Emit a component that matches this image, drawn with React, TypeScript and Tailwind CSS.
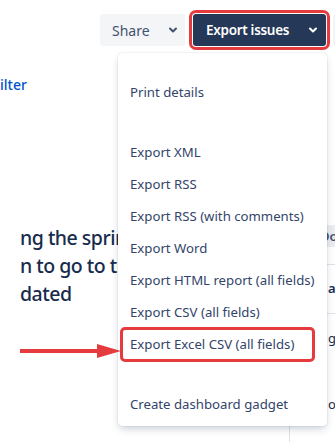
import React from "react";

const Chevron = ({ color }: { color: string }) => (
  <svg width="10" height="10" viewBox="0 0 10 10" fill="none">
    <path d="M2 3.5 L5 6.5 L8 3.5" stroke={color} strokeWidth="2" strokeLinecap="round" strokeLinejoin="round" />
  </svg>
);

const Item = ({ children }: { children: React.ReactNode }) => (
  <div className="h-[32px] flex items-center px-[12px] text-[13.2px] text-[#33446a] whitespace-nowrap">{children}</div>
);

export default function App() {
  return (
    <div className="relative w-[335px] h-[442px] overflow-hidden bg-white font-['Noto_Sans','Open_Sans',sans-serif]">
      {/* top bar */}
      <div className="flex items-start gap-[8px] pl-[100px] pt-[14px] h-[60px]">
        <div className="shrink-0 w-[85px] h-[32px] rounded-[3px] bg-[#f4f5f7] flex items-center justify-between pl-[12px] pr-[7px] text-[14px] text-[#42526e]">
          <span>Share</span>
          <Chevron color="#42526e" />
        </div>
        <div className="shrink-0 w-[133px] h-[32px] rounded-[3px] bg-[#253858] flex items-center justify-between pl-[13px] pr-[8px] text-[13.5px] tracking-[-0.3px] font-semibold text-white outline-[3px] outline-solid outline-[#e53a3e] outline-offset-[1px]">
          <span>Export issues</span>
          <Chevron color="#ffffff" />
        </div>
        <div className="shrink-0 ml-[-1px] w-[20px] h-[32px] rounded-[3px] bg-[#f4f5f7]" />
      </div>

      {/* body */}
      <div className="flex h-[382px]">
        <div className="w-[289px] shrink-0">
          <div className="mt-[15px] h-[20px] leading-[20px] text-[14px] font-medium text-[#0052cc]">ilter</div>
          <div className="mt-[129px] pl-[20px] text-[19.5px] tracking-[-0.5px] leading-[28px] font-medium text-[#172b4d] whitespace-nowrap">
            <div>ng the sprint</div>
            <div>n to go to the</div>
            <div>dated</div>
          </div>
        </div>
        <div className="flex-1 border-l border-[#dfe1e6] text-[13px] text-[#172b4d] whitespace-nowrap">
          <div className="mt-[165px] h-[22px] bg-[#ebecf0] pl-[30px] leading-[22px] font-semibold text-[#42526e]">Do</div>
          <div className="h-[18px] border-b border-[#dfe1e6]" />
          <div className="h-[48px] pl-[38px] flex items-center font-semibold">ai</div>
          <div className="border-t border-[#dfe1e6] pl-[38px] pt-[14px] leading-[20px]">gn</div>
          <div className="pl-[38px] mt-[46px] leading-[20px]">ort</div>
        </div>
      </div>

      {/* dropdown menu */}
      <div className="absolute left-[118px] top-[53px] w-[209px] h-[373px] bg-white rounded-[4px] shadow-[0_4px_8px_-2px_rgba(9,30,66,0.25),0_0_1px_rgba(9,30,66,0.31)] pt-[24px]">
        <Item>Print details</Item>
        <div className="h-[28px]" />
        <Item>Export XML</Item>
        <Item>Export RSS</Item>
        <Item>Export RSS (with comments)</Item>
        <Item>Export Word</Item>
        <Item>Export HTML report (all fields)</Item>
        <Item>Export CSV (all fields)</Item>
        <Item>Export Excel CSV (all fields)</Item>
        <div className="h-[28px]" />
        <Item>Create dashboard gadget</Item>
      </div>

      {/* highlight box */}
      <div className="absolute left-[120px] top-[327px] w-[195px] h-[35px] border-[3px] border-[#e53a3e] rounded-[5px]" />

      {/* arrow */}
      <svg className="absolute left-[20px] top-[343px]" width="102" height="16" viewBox="0 0 102 16">
        <rect x="0" y="6" width="82" height="4" fill="#e53a3e" />
        <path d="M77 1 L101 8 L77 15 Z" fill="#e53a3e" />
      </svg>
    </div>
  );
}
